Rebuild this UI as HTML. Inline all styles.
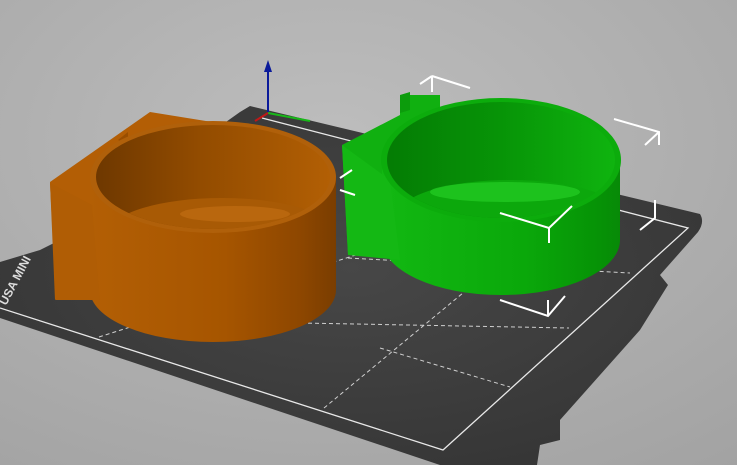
<!DOCTYPE html>
<html><head><meta charset="utf-8"><style>
html,body{margin:0;padding:0;width:737px;height:465px;overflow:hidden;background:#aaa}
</style></head><body>
<svg width="737" height="465" viewBox="0 0 737 465" xmlns="http://www.w3.org/2000/svg">
<defs>
<radialGradient id="bg" cx="0.45" cy="0.3" r="0.9"><stop offset="0" stop-color="#bdbdbd"/><stop offset="1" stop-color="#a2a2a2"/></radialGradient>
<radialGradient id="bed" cx="0.5" cy="0.45" r="0.7"><stop offset="0" stop-color="#474747"/><stop offset="1" stop-color="#333"/></radialGradient>
<linearGradient id="ob" x1="0" x2="1"><stop offset="0" stop-color="#b35f05"/><stop offset="0.55" stop-color="#a65500"/><stop offset="0.85" stop-color="#8e4700"/><stop offset="1" stop-color="#7a3d00"/></linearGradient>
<linearGradient id="oi" x1="0" x2="1"><stop offset="0" stop-color="#6e3800"/><stop offset="0.45" stop-color="#934c00"/><stop offset="1" stop-color="#b25f04"/></linearGradient>
<linearGradient id="gb" x1="0" x2="1"><stop offset="0" stop-color="#12b812"/><stop offset="0.6" stop-color="#0aa80a"/><stop offset="0.9" stop-color="#069306"/><stop offset="1" stop-color="#078a07"/></linearGradient>
<linearGradient id="gi" x1="0" x2="1"><stop offset="0" stop-color="#047c04"/><stop offset="0.5" stop-color="#079407"/><stop offset="1" stop-color="#0fb40f"/></linearGradient>
<clipPath id="co"><ellipse cx="213" cy="177" rx="117" ry="52"/></clipPath>
<clipPath id="cg"><ellipse cx="501" cy="160" rx="114" ry="58"/></clipPath>
</defs>
<rect width="737" height="465" fill="url(#bg)"/>
<!-- bed -->
<path d="M250,106 L700,214 Q705,222 698,232 L660,275 L668,285 L640,330 L560,420 L560,440 L540,445 L537,465 L440,465 L0,318 L0,262 L40,250 L60,240 L240,112 Z" fill="url(#bed)"/>
<path d="M262,118 L688,228 L443,450 L0,308" fill="none" stroke="#e8e8e8" stroke-width="1.3"/>
<g stroke="#cfcfcf" stroke-width="1" stroke-dasharray="4,3" fill="none">
<line x1="99" y1="337" x2="362" y2="253"/>
<line x1="324" y1="408" x2="463" y2="293"/>
<line x1="301" y1="323" x2="569" y2="328"/>
<line x1="348" y1="258" x2="630" y2="273"/>
<line x1="380" y1="348" x2="510" y2="387"/>
</g>
<text x="0" y="0" transform="translate(6,306) rotate(-62)" fill="#ddd" font-family="Liberation Sans, sans-serif" font-weight="bold" font-size="12">USA MINI</text>
<!-- axes -->
<line x1="268" y1="112" x2="268" y2="68" stroke="#0a1a9a" stroke-width="2"/>
<path d="M268,60 L264,72 L272,72 Z" fill="#0a1a9a"/>
<line x1="268" y1="113" x2="310" y2="121" stroke="#18b818" stroke-width="2"/>
<line x1="268" y1="113" x2="255" y2="121" stroke="#c01818" stroke-width="2"/>
<!-- orange -->
<path d="M50,182 L150,112 L212,122 L318,150 L55,300 Z" fill="#b35e05"/>
<path d="M118,140 L128,132 L128,145 Z" fill="#9a4e00"/>
<path d="M90,177 L90,290 A123,52 0 0 0 336,290 L336,177 Z" fill="url(#ob)"/>
<path d="M50,183 L92,205 L100,300 L56,300 Z" fill="#b05d05"/>
<ellipse cx="213" cy="177" rx="123" ry="56" fill="#b0600a"/>
<ellipse cx="213" cy="177" rx="117" ry="52" fill="url(#oi)"/>
<g clip-path="url(#co)">
<ellipse cx="222" cy="232" rx="112" ry="34" fill="#a85a05"/>
<ellipse cx="235" cy="214" rx="55" ry="8" fill="#c06c12" opacity="0.7"/>
</g>
<!-- green -->
<path d="M342,145 L400,115 L400,95 L440,95 L440,112 L500,105 L395,250 L348,255 Z" fill="#10b010"/>
<path d="M400,95 L410,92 L410,110 L400,113 Z" fill="#0c9c0c"/>
<path d="M382,160 L382,240 A119,55 0 0 0 620,240 L620,160 Z" fill="url(#gb)"/>
<path d="M342,145 L348,255 L400,260 L390,180 Z" fill="#14b814"/>
<ellipse cx="501" cy="160" rx="120" ry="62" fill="#0cac0c"/>
<ellipse cx="501" cy="160" rx="114" ry="58" fill="url(#gi)"/>
<g clip-path="url(#cg)">
<ellipse cx="510" cy="215" rx="112" ry="35" fill="#0ca80c"/>
<ellipse cx="505" cy="192" rx="75" ry="10" fill="#2ad42a" opacity="0.6"/>
</g>
<!-- bounding box corners -->
<g stroke="#fff" stroke-width="2" fill="none">
<path d="M432,76 L470,88 M432,76 L432,92 M432,76 L420,84"/>
<path d="M614,119 L659,132 L659,145 M659,132 L645,145"/>
<path d="M500,213 L549,228 L572,206 M549,228 L549,243"/>
<path d="M500,300 L548,316 L565,296 M548,316 L548,300"/>
<path d="M655,200 L655,218 L640,230"/>
<path d="M352,170 L340,178 M340,190 L355,195"/>
</g>
</svg>
</body></html>
